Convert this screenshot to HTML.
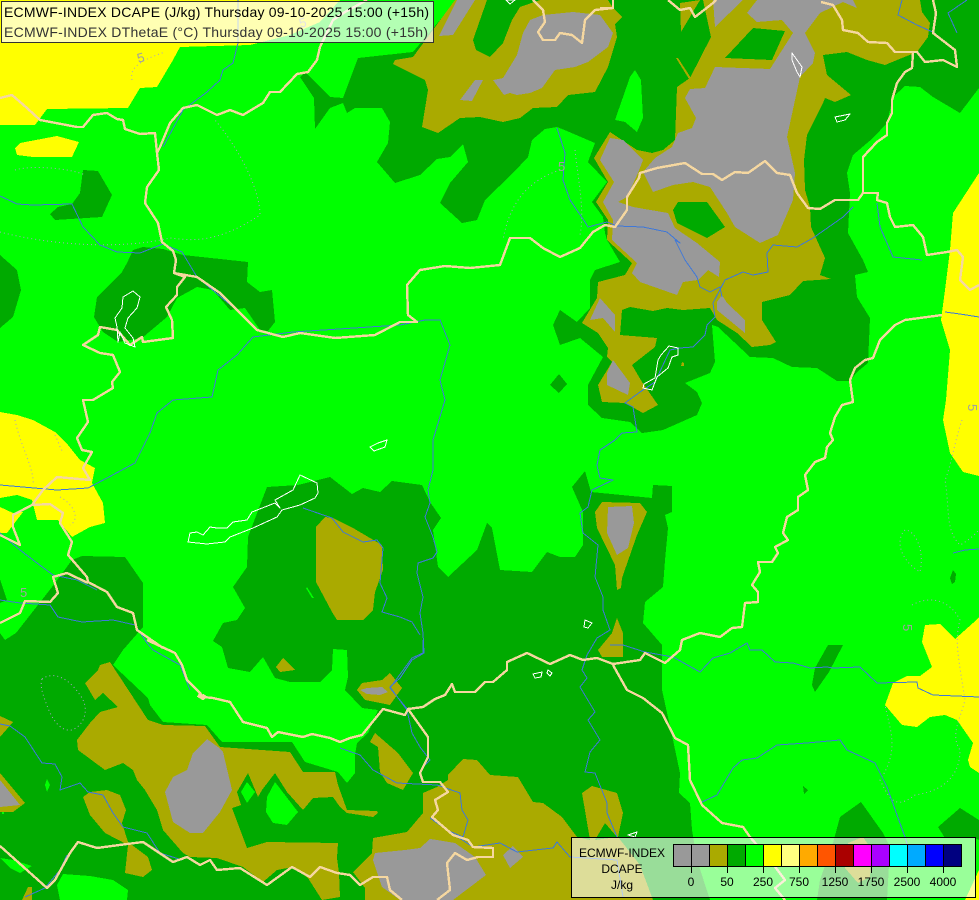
<!DOCTYPE html>
<html><head><meta charset="utf-8"><style>
html,body{margin:0;padding:0;background:#0f0;width:979px;height:900px;overflow:hidden}
svg{display:block;position:absolute;left:0;top:0}
text{font-family:"Liberation Sans",sans-serif}
</style></head><body>
<svg width="979" height="900" viewBox="0 0 979 900" xmlns="http://www.w3.org/2000/svg">
<rect width="979" height="900" fill="#00ff00"/>
<g shape-rendering="crispEdges">
<g fill="#ffff00">
<polygon points="0,0 340,0 320,22 290,35 250,45 180,47 173,60 157,87 140,88 128,108 47,109 35,125 0,125"/>
<polygon points="15,148 20,143 57,136 79,142 72,157 33,157 17,155"/>
<polygon points="0,412 17,415 33,420 55,432 68,445 80,460 95,468 92,483 103,503 105,523 90,527 72,537 58,520 37,520 32,500 17,495 0,498"/>
<polygon points="0,507 13,513 23,512 7,533 0,533"/>
<polygon points="979,173 953,213 950,250 945,290 941,320 950,350 946,400 943,420 950,453 963,472 979,476"/>
<polygon points="925,625 940,624 955,639 973,623 979,617 979,773 970,767 968,760 973,743 957,720 945,715 930,717 917,727 902,725 885,705 893,683 907,676 920,676 932,667 922,642"/>
<polygon points="965,900 972,885 979,870 979,900"/>
</g>
<g fill="#00aa00">
<polygon points="457,0 413,52 358,58 343,98 330,97 305,72 300,77 314,98 315,129 330,108 343,103 347,113 355,108 382,108 390,122 388,143 377,162 395,183 420,175 437,159 450,157 463,144 468,162 450,183 440,203 462,223 477,220 485,200 513,173 528,157 532,140 545,129 557,127 567,131 595,143 588,162 607,182 592,202 603,217 605,233 607,240 620,262 595,270 590,280 590,308 577,322 560,310 553,325 560,345 580,338 603,357 588,385 588,405 602,418 630,422 642,433 663,430 697,415 702,403 697,392 685,383 710,373 715,362 712,325 718,327 750,357 773,358 792,367 817,368 837,381 850,381 857,372 868,363 870,318 857,297 855,275 868,272 863,260 848,233 850,193 847,173 853,155 873,138 887,123 893,97 905,86 920,87 933,97 960,113 979,88 979,0"/>
<polygon points="550,385 559,374 567,384 559,393"/>
<polygon points="83,170 98,171 112,195 102,217 55,220 50,214 58,207 72,204 80,193"/>
<polygon points="127,263 133,250 143,247 163,249 183,255 248,262 247,282 260,292 272,290 275,322 268,331 260,330 245,308 230,310 213,290 197,287 177,298 167,317 142,338 118,342 103,332 94,317 97,297 122,272"/>
<polygon points="0,255 17,270 21,290 13,317 0,328"/>
<polygon points="0,579 7,600 0,603"/>
<polygon points="0,633 5,640 16,633 52,587 72,560 82,556 125,557 143,583 143,627 123,650 113,665 148,698 150,705 163,722 207,725 222,742 292,742 305,762 338,772 347,783 355,773 355,755 357,743 368,733 378,710 362,708 345,690 348,677 347,650 333,649 332,670 320,682 290,682 275,678 263,657 250,672 228,668 222,647 213,641 223,623 237,620 245,608 233,587 247,567 248,537 267,487 298,485 330,477 352,494 363,488 380,492 392,481 422,485 430,502 441,518 433,530 438,567 448,577 477,550 487,523 492,528 500,570 532,572 547,552 560,557 575,557 583,545 583,512 572,487 585,471 591,492 652,498 653,485 672,486 672,512 665,515 668,528 665,560 663,587 645,602 643,623 662,645 662,690 673,740 680,773 679,793 690,803 692,830 697,860 710,900 0,900"/>
<polygon points="828,645 843,645 829,672 815,692 812,685 815,668"/>
<polygon points="953,570 956,574 955,582 952,584 950,578"/>
<polygon points="803,786 808,790 804,794"/>
<polygon points="861,802 883,833 890,847 887,900 817,900 820,880 833,843 840,817"/>
<polygon points="938,827 960,808 979,820 979,840 975,838 945,838"/>
</g>
<g fill="#00ff00">
<polygon points="635,70 641,80 643,118 637,132 625,122 615,120 630,77"/>
<polygon points="0,858 13,860 32,866 20,873 10,868"/>
<polygon points="57,885 63,874 90,876 113,880 128,890 127,900 60,900"/>
<polygon points="47,779 50,785 47,792 45,785"/>
<polygon points="247,782 255,792 247,803 241,792"/>
<polygon points="275,782 298,812 287,825 273,823 266,812 267,797"/>
<polygon points="307,587 314,598 312,598 306,588"/>
<polygon points="2,812 4,812 4,814 2,814"/>
</g>
<g fill="#aaaa00">
<polygon points="455,0 413,57 395,60 393,64 425,80 428,90 422,127 438,133 460,118 480,117 503,122 520,118 533,108 557,107 568,95 595,92 608,67 617,37 615,24 622,17 613,8 608,0"/>
<polygon points="703,0 711,37 690,78 677,87 675,140 663,150 652,153 637,150 610,132 594,158 608,182 596,202 608,220 607,240 632,263 625,275 598,282 597,298 582,323 598,333 608,348 607,357 612,362 598,385 602,402 625,403 643,413 658,405 642,382 632,365 655,347 657,338 620,335 622,310 630,307 653,311 667,308 683,310 710,308 717,320 737,333 752,347 770,345 776,342 762,320 762,302 790,295 803,281 831,279 820,275 825,258 811,227 810,207 805,190 804,160 807,135 823,103 825,98 835,102 851,95 827,75 823,55 847,52 867,60 885,65 902,58 917,52 928,37 930,23 922,12 920,0"/>
<polygon points="680,3 700,0 681,32"/>
<polygon points="676,58 678,58 691,78 689,79"/>
<polygon points="100,665 110,662 148,720 163,725 205,726 220,747 290,752 303,772 335,772 338,785 347,810 377,811 378,813 373,817 347,813 340,807 333,797 313,798 303,810 287,792 275,773 262,790 258,797 248,773 237,792 241,805 232,808 247,848 267,842 338,843 337,858 339,873 340,897 322,900 308,878 293,867 277,870 263,882 243,867 217,858 190,857 183,853 163,830 157,810 145,790 137,780 133,770 123,763 105,770 78,750 77,740 90,723 100,712 118,707 103,693 95,700 85,683 98,670"/>
<polygon points="0,716 13,722 0,737"/>
<polygon points="0,773 25,803 13,812 0,812"/>
<polygon points="83,797 90,792 107,790 120,795 126,810 122,823 128,842 148,857 152,870 143,877 125,873 128,845 105,833 90,815"/>
<polygon points="22,900 28,887 32,887 32,900"/>
<polygon points="276,667 283,658 295,670 280,672"/>
<polygon points="325,517 333,518 353,528 370,538 382,545 383,570 375,592 373,610 363,620 337,620 332,612 316,582 316,527"/>
<polygon points="602,502 640,503 647,512 637,535 622,578 621,588 617,590 615,565 597,528 595,512"/>
<polygon points="617,618 623,633 623,657 602,657 598,650 612,633"/>
<polygon points="357,690 362,683 382,680 390,673 402,688 390,705 365,700"/>
<polygon points="370,742 375,733 398,753 413,773 403,790 387,783 380,772 378,747"/>
<polygon points="448,775 463,759 477,760 490,775 518,777 533,802 543,803 562,817 577,837 590,840 582,793 592,786 617,793 623,813 618,837 640,865 653,900 365,900 365,888 353,872 372,853 373,838 407,832 423,813 423,793 437,787 448,780"/>
<polygon points="848,843 863,837 872,850 870,877 858,883 845,868"/>
<polygon points="682,362 684,363 684,366 681,366"/>
</g>
<g fill="#00aa00">
<polygon points="487,0 473,40 476,50 490,57 503,43 512,20 520,7 540,0"/>
<polygon points="753,28 785,31 772,60 725,58"/>
<polygon points="678,202 707,202 725,227 707,238 677,223 673,210"/>
<polygon points="605,823 617,837 595,840"/>
</g>
<g fill="#999999">
<polygon points="457,0 475,0 453,35 439,36"/>
<polygon points="483,80 475,80 460,100 472,101"/>
<polygon points="530,20 543,15 573,12 600,15 613,33 608,47 588,62 575,67 555,70 542,88 530,93 517,95 510,93 504,95 493,80 503,78 517,55 523,33"/>
<polygon points="713,0 715,27 743,0"/>
<polygon points="757,0 747,13 757,22 782,20 793,33 770,69 715,67 705,88 690,89 685,98 696,118 692,128 678,133 672,147 655,158 643,172 653,192 673,185 693,182 710,187 727,213 735,227 760,243 778,235 793,200 795,173 787,137 800,77 813,63 815,53 807,37 805,33 820,13 843,2 857,8 853,0"/>
<polygon points="610,138 623,140 643,160 638,173 627,197 618,202 633,207 668,213 675,228 697,243 720,262 719,277 708,270 698,280 683,282 677,295 640,282 632,273 637,263 612,240 613,220 603,202 614,182 600,160"/>
<polygon points="600,298 615,315 615,332 603,318 590,320"/>
<polygon points="722,295 727,303 745,320 745,333 717,310 717,302"/>
<polygon points="613,360 630,383 628,395 607,385 607,373"/>
<polygon points="207,739 218,747 223,752 232,790 220,812 203,833 190,833 173,822 165,792 173,777 187,770 193,753"/>
<polygon points="0,780 20,805 0,807"/>
<polygon points="608,507 632,506 634,523 628,548 617,555 607,533"/>
<polygon points="360,690 367,688 382,687 388,692 380,695 367,694"/>
<polygon points="373,860 375,853 405,850 420,848 430,839 437,840 455,843 475,857 486,875 453,900 400,900 382,887"/>
<polygon points="503,855 513,846 523,857 510,868"/>
</g>
</g>
<g fill="none" stroke="#a8a0c8" stroke-width="1" stroke-dasharray="1 3">
<path d="M42 679C55 670 70 680 80 695C90 708 85 725 72 730C58 732 50 715 45 700C42 692 40 685 42 679Z"/>
<path d="M15 170C30 165 70 168 85 175M0 232C50 245 120 250 170 238C190 240 215 245 260 215C260 190 240 150 215 120"/>
<path d="M132 80C130 70 135 62 165 52"/>
<path d="M15 420C20 445 35 470 33 485M55 435C60 445 60 450 64 452M60 497C75 505 80 520 70 525"/>
<path d="M560 170C530 180 510 200 503 240M575 150C578 180 585 210 580 235"/>
<path d="M905 530C895 540 900 560 920 572C925 550 915 530 905 530ZM912 605C930 595 950 600 960 620C955 640 957 650 965 700C960 720 950 735 960 750C960 770 950 790 915 795C895 810 890 800 880 780C900 750 890 730 885 705M962 420C955 440 950 470 945 480C950 510 945 530 960 545C970 540 979 530 979 530"/>
</g>
<g fill="none" stroke="#3f78d8" stroke-width="1" stroke-linejoin="round" shape-rendering="crispEdges">
<polyline points="238,0 238,43 233,63 223,70 220,80 207,92 183,110 163,147"/>
<polyline points="0,196 17,204 33,205 72,204 83,227 100,245 117,252 140,253 163,244 182,252 197,277 233,307 260,332"/>
<polyline points="0,485 57,490 88,488 107,478 135,463 150,433 157,413 173,400 212,397 218,370 237,355 253,337 293,332 400,325 425,320 440,320 450,345 440,380 445,400 433,440 433,470 428,490 430,503 425,517 433,537 437,552 433,558 418,563 417,573 423,597 420,613 423,633 424,653 412,660 400,678 390,687 407,710 412,733 420,747 430,760 422,768"/>
<polyline points="303,508 332,518 343,532 363,542 377,540 383,548 380,583 387,598 382,612 400,617 412,622 420,635"/>
<polyline points="615,440 600,450 597,465 598,470 600,478 613,480 592,490 588,507 580,513 583,533 598,545 595,577 603,597 603,610 610,630 597,638 587,655 582,670 587,678 580,687 595,712 588,720 600,740 590,752 585,772 595,773 607,803 607,813 617,837"/>
<polyline points="615,440 622,433 637,432 633,407 625,403 640,392 655,382 670,350 680,348 693,347 705,335 707,325 715,317 713,303 725,280 743,272 753,275 768,272 767,253 773,245 797,247 813,238 843,217 853,207"/>
<polyline points="557,128 565,153 563,180 570,200 585,222 588,227 607,222 617,226 643,227 667,232 680,243 675,240 685,260 697,277 700,287 710,292 720,287 722,297"/>
<polyline points="877,203 880,227 893,257 922,260"/>
<polyline points="902,0 898,15 917,25 928,30 935,33"/>
<polyline points="967,0 948,13 957,33"/>
<polyline points="945,312 960,314 979,317"/>
<polyline points="953,553 965,550 979,549"/>
<polyline points="610,645 623,645 645,652 673,657 700,672 713,658 730,653 747,643 750,650 762,650 775,662 793,663 810,668 827,667 833,668 860,667 877,683 917,682 918,688 933,695 979,697"/>
<polyline points="700,803 717,795 733,768 742,760 757,758 777,745 807,743 840,740 847,750 875,763 887,787 897,815 905,837 912,860"/>
<polyline points="0,724 10,726 25,737 42,763 55,764 62,777 60,790 80,783 88,792 103,795 113,813 123,827 147,833 160,853 182,860"/>
<polyline points="67,855 60,870 45,888 25,897"/>
<polyline points="0,533 20,550 37,563 53,575 77,580 97,590"/>
<polyline points="0,600 20,603 50,605 58,617 82,622 113,620 135,625 147,643 153,650 180,665 190,690"/>
<polyline points="340,748 360,755 373,770 397,783 437,785 460,793 462,810 468,820 463,837 447,830 430,818"/>
<polyline points="447,830 473,847 500,843 517,852 553,848 557,842 570,857 617,860 623,897"/>
<polyline points="423,640 423,653 412,658 390,688 408,710"/>
</g>
<g fill="none" stroke="#f5d7a0" stroke-width="2.4" stroke-linejoin="round" shape-rendering="crispEdges">
<polyline points="0,98 12,95 27,108 40,120 77,127 83,127 93,115 107,113 117,119 123,120 125,129 140,134 155,133 157,153 159,170 147,187 145,203 158,223 162,242 173,251 176,260 174,273 185,277 177,287 177,295 166,307 172,320 173,338 143,342 142,337 130,345 117,330 100,327 98,335 83,345 100,353 113,355 120,372 112,382 113,388 93,400 83,400 88,422 77,438 82,450 92,452 83,468 90,480 57,477 43,490 32,505 13,515 13,527 20,545 0,535"/>
<polyline points="32,505 50,504 63,513 60,523 72,542 68,555 87,577 88,582 107,592 117,607 133,613 137,630 163,648"/>
<polyline points="88,583 67,573 53,577 58,593 50,602 25,601 20,613 0,623"/>
<polyline points="147,640 175,653 182,665 187,680 200,693 203,697 213,698 230,702 243,722 267,728 272,737 278,732 303,737 312,734 330,738 340,742 350,738 362,735 383,709 405,715 408,709 423,707 435,699 445,695 452,684 455,692 475,692 485,682 493,682 507,670 507,662 527,653 550,664 570,655 583,660 597,658 613,664 640,660 645,653 665,663 680,650 682,640 700,633 720,637 732,628 742,627 745,603 758,602 758,592 752,585 760,572 758,562 772,562 778,553 775,547 788,540 783,533 787,517 798,510 798,497 808,490 805,475 815,462 825,458 827,447 833,440 830,433 835,417 842,405 853,402 850,380 855,368 865,360 873,358 880,340 895,325 905,320 942,315"/>
<polyline points="863,193 878,193 877,200 887,203 890,217 895,227 913,225 923,237 927,255 947,252 957,250 963,257 960,280 970,290 979,285"/>
<polyline points="913,53 912,68 905,72 897,83 892,100 892,113 887,123 887,135 877,142 863,157 863,193 858,200 835,200 820,209 808,208 797,193 790,175 777,173 765,161 748,173 735,172 722,180 713,174 702,174 685,163 657,168 640,173 639,178 627,197 627,210 615,227 605,225 593,232 580,248 560,257 543,248 530,238 510,238 500,265 470,268 445,266 420,270 407,285 408,315 417,322 400,322 375,335 335,338 300,333 283,337 257,330 220,293 197,277 174,273"/>
<polyline points="367,0 345,12 333,20 320,47 317,60 308,72 297,74 280,92 270,92 263,103 243,115 230,110 217,115 197,105 183,108 170,123 160,147 157,153"/>
<polyline points="533,0 543,10 545,22 538,32 543,40 555,40 560,33 572,35 582,43 585,20 595,10 613,8 613,0"/>
<polyline points="613,8 600,8"/>
<polyline points="668,0 680,10 690,8 695,17 713,3 716,0"/>
<polyline points="821,2 833,5 842,20 843,30 858,33 868,42 887,43 895,52 917,52 925,62 943,60 957,67 955,50 933,33 936,13 933,0"/>
<polyline points="408,709 428,737 428,757 420,773 423,782 440,782 448,792 435,800 438,810 432,817 453,835 468,840 473,847 493,848 493,857 478,857 467,860 455,853 447,863 450,890 437,900"/>
<polyline points="0,846 47,888 55,880 70,853 78,842 97,848 127,844 143,842 173,862 187,857 200,865 210,860 217,870 240,868 267,885 292,867 310,877 320,867 337,873 350,875 360,885 373,877 387,877 390,890 402,900"/>
<polyline points="613,665 627,690 643,698 662,713 675,738 688,745 690,780 702,805 722,823 743,827 750,837 770,860 785,880 775,888 785,900"/>
<path d="M198 695l5 3 2-3" stroke-width="4"/>
</g>
<g fill="none" stroke="#ffffff" stroke-width="1" stroke-linejoin="round" shape-rendering="crispEdges">
<polygon points="188,542 190,533 197,532 203,535 210,527 217,528 227,528 233,522 247,520 252,512 275,503 280,508 275,500 293,490 300,475 317,483 318,493 315,498 300,505 282,510 277,517 253,528 230,537 225,542 207,544"/>
<polygon points="133,291 140,297 137,308 128,318 125,328 133,338 135,347 125,343 120,332 118,342 117,327 115,318 122,308 123,297"/>
<polygon points="669,346 678,348 678,355 672,357 668,368 657,377 652,390 643,388 644,384 655,378 658,360 661,355"/>
<polygon points="792,53 802,67 800,77 797,72 792,60"/>
<polygon points="835,117 850,114 845,120 837,122"/>
<polygon points="370,447 378,443 387,440 385,447 374,451"/>
<polygon points="533,674 542,672 541,677 535,678"/>
<polygon points="548,670 552,673 550,676 547,673"/>
<polygon points="585,620 592,623 588,628 584,627"/>
<polygon points="628,835 637,832 635,837"/>
<polygon points="506,0 515,0 510,4"/>
</g>
<g fill="#a0a0a0" font-size="13">
<text x="137" y="62" transform="rotate(-15 141 57)">5</text>
<text x="299" y="27" transform="rotate(-15 303 22)">5</text>
<text x="558" y="171">5</text>
<text x="903" y="632" transform="rotate(90 907 628)">5</text>
<text x="968" y="412" transform="rotate(90 972 408)">5</text>
<text x="20" y="597">5</text>
</g>
<rect x="1.5" y="1.5" width="432" height="41" fill="#ffffff" fill-opacity="0.7" stroke="#333333" stroke-width="1" shape-rendering="crispEdges"/>
<text x="4" y="17" font-size="14" fill="#000000" textLength="425" lengthAdjust="spacing">ECMWF-INDEX DCAPE (J/kg) Thursday 09-10-2025 15:00 (+15h)</text>
<text x="4" y="37" font-size="14" fill="#333333" textLength="424" lengthAdjust="spacing">ECMWF-INDEX DThetaE (°C) Thursday 09-10-2025 15:00 (+15h)</text>
<rect x="571.5" y="837.5" width="404" height="60" fill="#ffffff" fill-opacity="0.6" stroke="#000000" stroke-width="1" shape-rendering="crispEdges"/>
<g shape-rendering="crispEdges" stroke="#000000" stroke-width="1">
<rect x="673.5" y="844.5" width="18" height="22" fill="#999999"/>
<rect x="691.5" y="844.5" width="18" height="22" fill="#999999"/>
<rect x="709.5" y="844.5" width="18" height="22" fill="#aaaa00"/>
<rect x="727.5" y="844.5" width="18" height="22" fill="#00aa00"/>
<rect x="745.5" y="844.5" width="18" height="22" fill="#00ff00"/>
<rect x="763.5" y="844.5" width="18" height="22" fill="#ffff00"/>
<rect x="781.5" y="844.5" width="18" height="22" fill="#ffff80"/>
<rect x="799.5" y="844.5" width="18" height="22" fill="#ffaa00"/>
<rect x="817.5" y="844.5" width="18" height="22" fill="#ff5500"/>
<rect x="835.5" y="844.5" width="18" height="22" fill="#aa0000"/>
<rect x="853.5" y="844.5" width="18" height="22" fill="#ff00ff"/>
<rect x="871.5" y="844.5" width="18" height="22" fill="#aa00ff"/>
<rect x="889.5" y="844.5" width="18" height="22" fill="#00ffff"/>
<rect x="907.5" y="844.5" width="18" height="22" fill="#00aaff"/>
<rect x="925.5" y="844.5" width="18" height="22" fill="#0000ff"/>
<rect x="943.5" y="844.5" width="18" height="22" fill="#000080"/>
<path d="M691.5 866v7M727.5 866v7M763.5 866v7M799.5 866v7M835.5 866v7M871.5 866v7M907.5 866v7M943.5 866v7" fill="none"/>
</g>
<g font-size="12" fill="#000000" text-anchor="middle">
<text x="622" y="857">ECMWF-INDEX</text>
<text x="622" y="873">DCAPE</text>
<text x="622" y="889">J/kg</text>
<text x="691" y="886">0</text>
<text x="727" y="886">50</text>
<text x="763" y="886">250</text>
<text x="799" y="886">750</text>
<text x="835" y="886">1250</text>
<text x="871" y="886">1750</text>
<text x="907" y="886">2500</text>
<text x="943" y="886">4000</text>
</g>
</svg>
</body></html>
